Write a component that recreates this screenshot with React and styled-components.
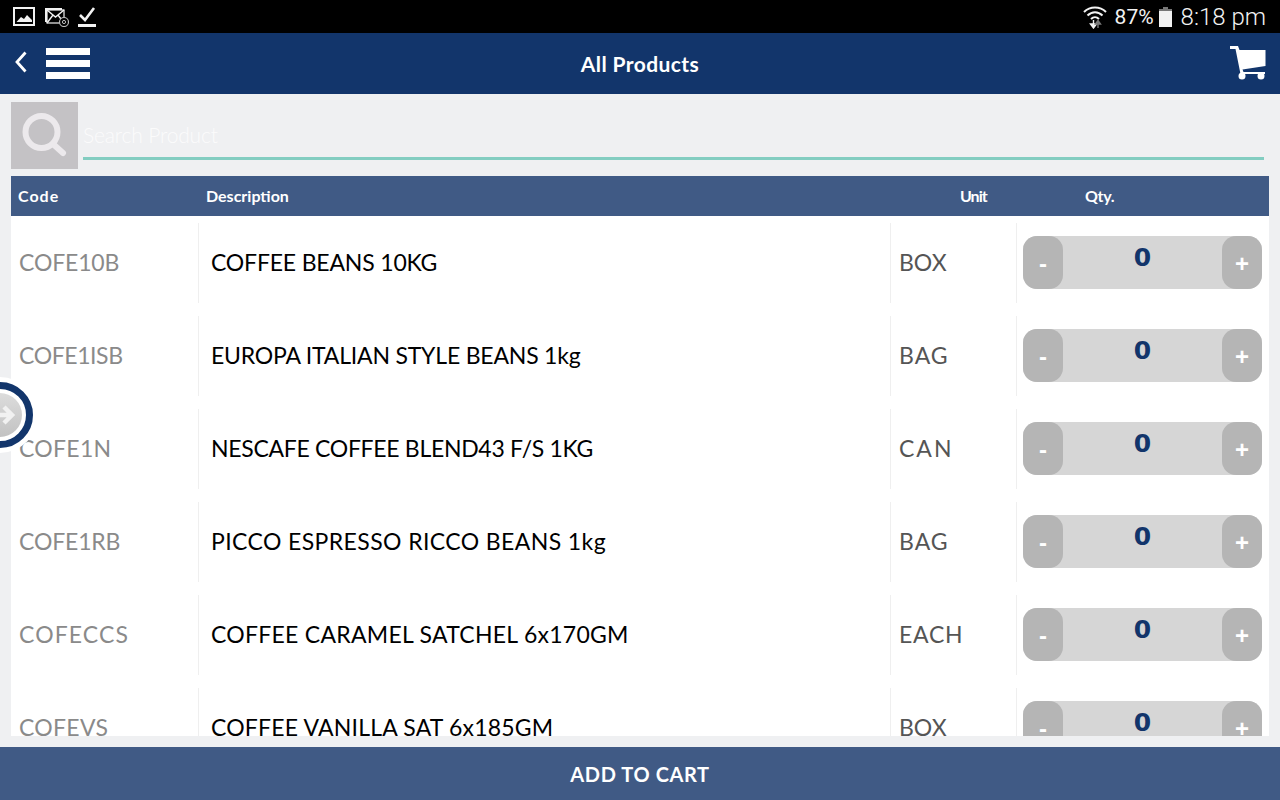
import styled, { createGlobalStyle } from 'styled-components';

const GlobalStyle = createGlobalStyle`
  html, body {
    margin: 0;
    padding: 0;
    background: #eff0f2;
  }
  * {
    box-sizing: border-box;
  }
`;

const Screen = styled.div`
  position: relative;
  width: 1280px;
  height: 800px;
  overflow: hidden;
  display: flex;
  flex-direction: column;
  background: #eff0f2;
  font-family: Lato, "Open Sans", sans-serif;
`;

const StatusBar = styled.div`
  height: 33px;
  background: #000;
  display: flex;
  align-items: center;
  justify-content: space-between;
  padding: 0 14px 0 13px;
  color: #f2f2f2;
  font-family: Roboto, sans-serif;
`;

const StatusGroup = styled.div`
  display: flex;
  align-items: center;
  gap: ${(p) => p.$gap}px;
`;

const Percent = styled.span`
  font-size: 21px;
  margin-left: 3px;
`;

const Clock = styled.span`
  font-size: 24px;
  font-weight: 300;
  margin-left: 4px;
`;

const Header = styled.div`
  height: 61px;
  background: #12356b;
  display: flex;
  align-items: center;
  padding: 0 14px 0 15px;
`;

const Burger = styled.div`
  width: 44px;
  margin-left: 19px;
  display: flex;
  flex-direction: column;
  gap: 5px;
  margin-top: -1px;
`;

const BurgerBar = styled.div`
  height: 7px;
  background: #fff;
`;

const Title = styled.div`
  flex: 1;
  text-align: center;
  color: #fff;
  font-size: 21px;
  font-weight: 700;
  letter-spacing: 0.4px;
  padding-right: 40px;
`;

const SearchRow = styled.div`
  display: flex;
  gap: 5px;
  padding: 8px 16px 0 11px;
  height: 82px;
`;

const SearchIconBox = styled.div`
  width: 67px;
  height: 67px;
  background: #c4c2c5;
  display: flex;
  align-items: center;
  justify-content: center;
`;

const SearchField = styled.div`
  flex: 1;
  height: 58px;
  border-bottom: 3px solid #83cdc1;
  display: flex;
  align-items: flex-end;
  padding-bottom: 10px;
  color: rgba(255, 255, 255, 0.75);
  font-size: 21px;
  font-weight: 300;
  letter-spacing: -0.15px;
`;

const Table = styled.div`
  margin: 0 11px;
  width: 1258px;
`;

const HeadRow = styled.div`
  height: 40px;
  background: #405a85;
  display: grid;
  grid-template-columns: 188px 754px 125px 1fr;
  align-items: center;
  padding-left: 7px;
  color: #fff;
  font-size: 16px;
  font-weight: 700;
`;

const HeadCell = styled.div`
  padding-bottom: 1px;
  letter-spacing: ${(p) => p.$spacing || 0}px;
`;

const List = styled.div`
  height: 520px;
  background: #fff;
  overflow: hidden;
  padding-top: 7px;
  display: flex;
  flex-direction: column;
  gap: 13px;
`;

const Row = styled.div`
  flex: none;
  height: 80px;
  display: grid;
  grid-template-columns: 188px 692px 126px 1fr;
`;

const Cell = styled.div`
  display: flex;
  align-items: center;
  padding-left: ${(p) => p.$pad}px;
  padding-bottom: 2px;
  color: ${(p) => p.$color};
  font-size: 23px;
  letter-spacing: ${(p) => p.$spacing || 0}px;
  border-right: ${(p) => (p.$last ? 'none' : '1px solid #efefef')};
  white-space: nowrap;
`;

const Stepper = styled.div`
  width: 239px;
  height: 53px;
  background: #d6d6d6;
  border-radius: 14px;
  display: flex;
  justify-content: space-between;
`;

const StepButton = styled.div`
  width: 40px;
  height: 53px;
  background: #b5b5b5;
  border-radius: 14px;
  color: #fff;
  font-family: "Liberation Sans", sans-serif;
  font-size: 24px;
  font-weight: 700;
  display: flex;
  align-items: center;
  justify-content: center;
  padding-top: 4px;
`;

const Qty = styled.div`
  color: #12356b;
  font-family: "DejaVu Sans", sans-serif;
  font-size: 25px;
  font-weight: 700;
  line-height: 44px;
`;

const Footer = styled.div`
  margin-top: 11px;
  height: 53px;
  background: #405a85;
  color: #fff;
  font-size: 20px;
  font-weight: 700;
  letter-spacing: 0.6px;
  display: flex;
  align-items: center;
  justify-content: center;
`;

const Handle = styled.div`
  position: absolute;
  left: -38px;
  top: 377px;
  width: 76px;
  height: 76px;
  border-radius: 50%;
  background: #fff;
  display: flex;
  align-items: center;
  justify-content: center;
`;

const HandleRing = styled.div`
  width: 66px;
  height: 66px;
  border-radius: 50%;
  background: #fff;
  border: 7px solid #12356b;
  display: flex;
  align-items: center;
  justify-content: center;
`;

const HandleDisc = styled.div`
  flex: none;
  width: 44px;
  height: 44px;
  border-radius: 50%;
  background: linear-gradient(#dcdcdc, #c2c2c2);
  display: flex;
  align-items: center;
  justify-content: flex-end;
  padding-right: 6px;
`;

// codeFit, nameFit, unitFit: tracking per row, the reference font runs wider or narrower by word
const products = [
  { code: 'COFE10B', name: 'COFFEE BEANS 10KG', unit: 'BOX', codeFit: -0.15, nameFit: -0.18, unitFit: 0 },
  { code: 'COFE1ISB', name: 'EUROPA ITALIAN STYLE BEANS 1kg', unit: 'BAG', codeFit: -0.4, nameFit: -0.2, unitFit: 1 },
  { code: 'COFE1N', name: 'NESCAFE COFFEE BLEND43 F/S 1KG', unit: 'CAN', codeFit: 0.3, nameFit: -0.3, unitFit: 2 },
  { code: 'COFE1RB', name: 'PICCO ESPRESSO RICCO BEANS 1kg', unit: 'BAG', codeFit: -0.15, nameFit: 0.4, unitFit: 1 },
  { code: 'COFECCS', name: 'COFFEE CARAMEL SATCHEL 6x170GM', unit: 'EACH', codeFit: 1.1, nameFit: 0.27, unitFit: 0.75 },
  { code: 'COFEVS', name: 'COFFEE VANILLA SAT 6x185GM', unit: 'BOX', codeFit: 0.3, nameFit: 0.2, unitFit: 0 },
];

const ImageIcon = () => (
  <svg width="22" height="19" viewBox="0 0 22 19">
    <rect x="1" y="1" width="20" height="17" fill="none" stroke="#f2f2f2" strokeWidth="2" />
    <path d="M3.5 15 L8 10 L11 12 L14 8 L19 13 L19 15 Z" fill="#f2f2f2" />
  </svg>
);

const MailIcon = () => (
  <svg width="25" height="20" viewBox="0 0 25 20">
    <rect x="1" y="1" width="17" height="14" fill="#f2f2f2" />
    <rect x="3" y="3" width="17" height="13" fill="#000" stroke="#f2f2f2" strokeWidth="1.2" />
    <path d="M3 3 L11.5 10 L20 3 M3 16 L9 8 M20 16 L14 8" fill="none" stroke="#f2f2f2" strokeWidth="1.4" />
    <circle cx="20" cy="15" r="4.5" fill="#000" stroke="#bbb" strokeWidth="1.2" />
    <circle cx="20" cy="15" r="1.6" fill="none" stroke="#bbb" strokeWidth="1" />
  </svg>
);

const CheckIcon = () => (
  <svg width="18" height="22" viewBox="0 0 18 22">
    <path d="M2 9 L7 14 L16 2" fill="none" stroke="#f2f2f2" strokeWidth="2.6" />
    <rect x="0" y="18" width="18" height="3" fill="#f2f2f2" />
  </svg>
);

const WifiIcon = () => (
  <svg width="24" height="24" viewBox="0 0 24 24">
    <path d="M1 7 C7 1 17 1 23 7 M4.5 10.5 C9 6 15 6 19.5 10.5 M8 14 C10.5 11.5 13.5 11.5 16 14" fill="none" stroke="#f2f2f2" strokeWidth="2" />
    <path d="M10.5 15 V20 M7.5 19 L10.5 23 L13.5 19 Z" fill="#f2f2f2" stroke="#f2f2f2" strokeWidth="1.4" />
    <path d="M15 23 V18 M12.5 19 L15 15.5 L17.5 19 Z" fill="#777" stroke="#777" strokeWidth="1.4" />
  </svg>
);

const BatteryIcon = () => (
  <svg width="13" height="20" viewBox="0 0 13 20">
    <rect x="4" y="0" width="5" height="3" fill="#777" />
    <rect x="0" y="2" width="13" height="3" fill="#777" />
    <rect x="0" y="4" width="13" height="16" fill="#f2f2f2" />
  </svg>
);

const BackIcon = () => (
  <svg width="12" height="22" viewBox="0 0 12 22" style={{ flex: 'none', marginTop: '-3px' }}>
    <path d="M10.5 1.5 L2 11 L10.5 20.5" fill="none" stroke="#fff" strokeWidth="2.8" />
  </svg>
);

const CartIcon = () => (
  <svg width="36" height="34" viewBox="0 0 36 34" style={{ flex: 'none', marginTop: '-2px' }}>
    <path d="M0 0 H8 L9.5 4 H35.5 V20 L12.5 23.5 L13.5 26 H35 V28 H10.5 L5.5 3 H0 Z" fill="#fff" />
    <circle cx="12" cy="30" r="3.5" fill="#fff" />
    <circle cx="31" cy="30" r="3.5" fill="#fff" />
  </svg>
);

const SearchIcon = () => (
  <svg width="46" height="46" viewBox="0 0 46 46">
    <circle cx="19.5" cy="19" r="16" fill="none" stroke="#ece9ec" strokeWidth="6" />
    <path d="M31 31 L41 40" stroke="#ece9ec" strokeWidth="6" strokeLinecap="round" />
  </svg>
);

const ArrowIcon = () => (
  <svg width="24" height="24" viewBox="0 0 24 24">
    <path d="M2 12 H20 M12 4 L20 12 L12 20" fill="none" stroke="#f1f1f1" strokeWidth="4.5" />
  </svg>
);

const App = () => {
  return (
    <Screen>
      <GlobalStyle />
      <StatusBar>
        <StatusGroup $gap={9}>
          <ImageIcon />
          <MailIcon />
          <CheckIcon />
        </StatusGroup>
        <StatusGroup $gap={5}>
          <WifiIcon />
          <Percent>87%</Percent>
          <BatteryIcon />
          <Clock>8:18 pm</Clock>
        </StatusGroup>
      </StatusBar>
      <Header>
        <BackIcon />
        <Burger>
          <BurgerBar />
          <BurgerBar />
          <BurgerBar />
        </Burger>
        <Title>All Products</Title>
        <CartIcon />
      </Header>
      <SearchRow>
        <SearchIconBox>
          <SearchIcon />
        </SearchIconBox>
        <SearchField>Search Product</SearchField>
      </SearchRow>
      <Table>
        <HeadRow>
          <HeadCell $spacing={1}>Code</HeadCell>
          <HeadCell>Description</HeadCell>
          <HeadCell $spacing={-1}>Unit</HeadCell>
          <HeadCell $spacing={-0.3}>Qty.</HeadCell>
        </HeadRow>
        <List>
          {products.map((item) => (
            <Row key={item.code}>
              <Cell $pad={8} $color="#8a8a8a" $spacing={item.codeFit}>{item.code}</Cell>
              <Cell $pad={12} $color="#000" $spacing={item.nameFit}>{item.name}</Cell>
              <Cell $pad={8} $color="#555" $spacing={item.unitFit}>{item.unit}</Cell>
              <Cell $pad={6} $last>
                <Stepper>
                  <StepButton>-</StepButton>
                  <Qty>0</Qty>
                  <StepButton>+</StepButton>
                </Stepper>
              </Cell>
            </Row>
          ))}
        </List>
      </Table>
      <Footer>ADD TO CART</Footer>
      <Handle>
        <HandleRing>
          <HandleDisc>
            <ArrowIcon />
          </HandleDisc>
        </HandleRing>
      </Handle>
    </Screen>
  );
};

export default App;
